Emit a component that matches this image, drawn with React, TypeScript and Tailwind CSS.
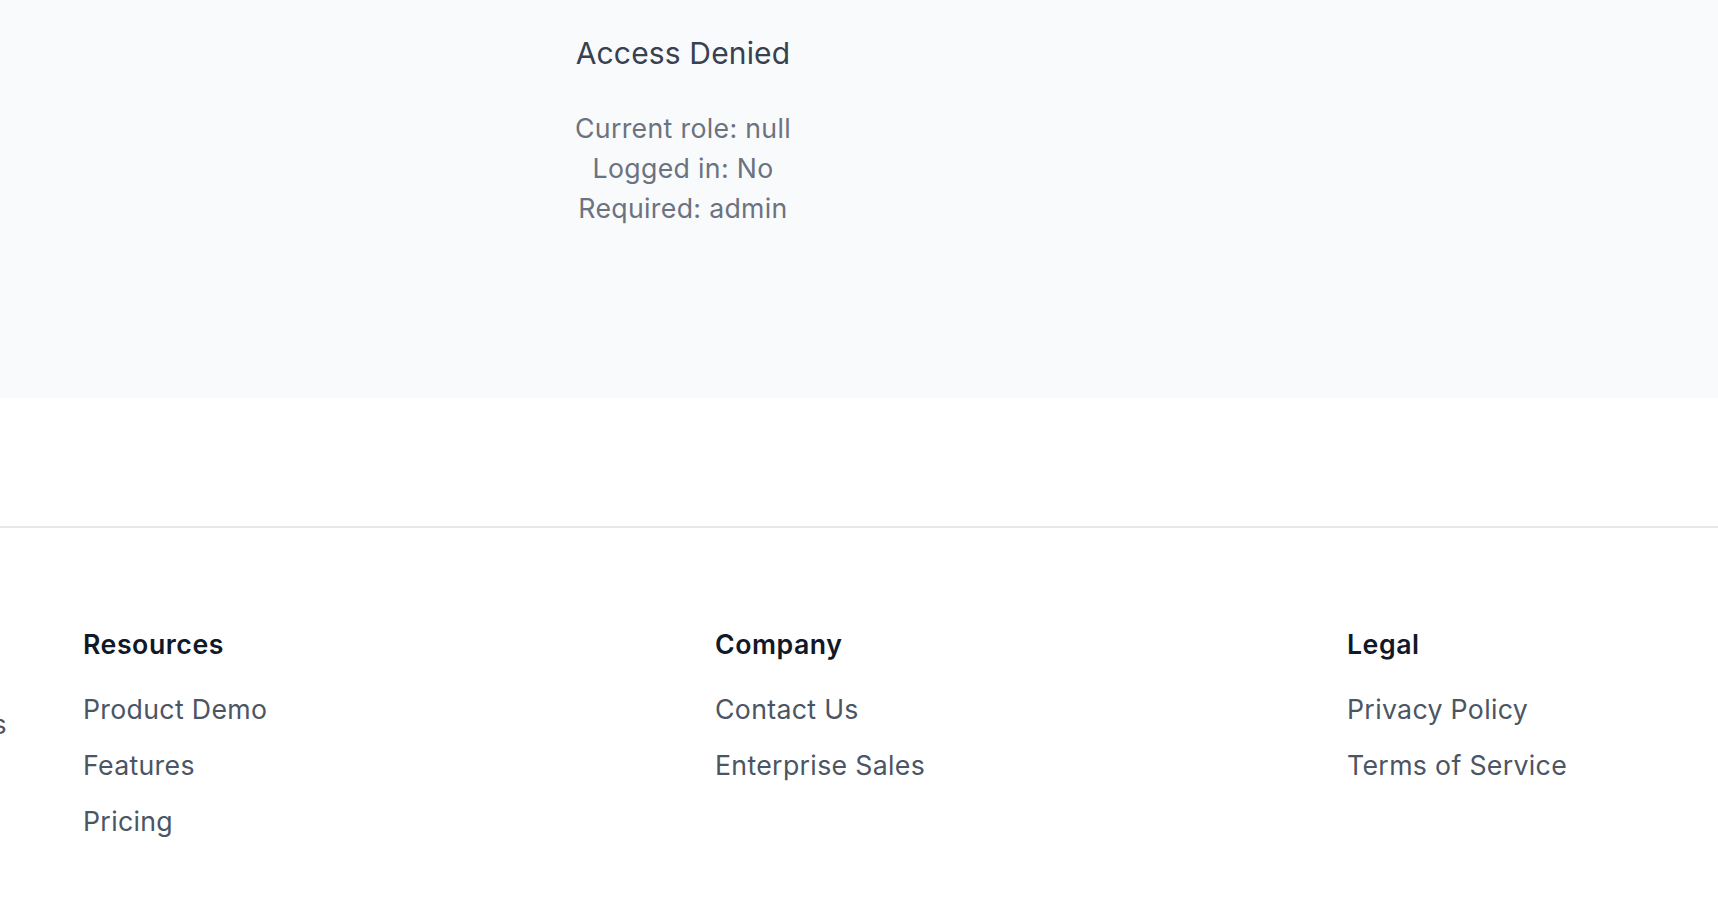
import React from 'react'

const resources = ['Product Demo', 'Features', 'Pricing']
const company = ['Contact Us', 'Enterprise Sales']
const legal = ['Privacy Policy', 'Terms of Service']

function FooterColumn({ title, links }: { title: string; links: string[] }) {
  return (
    <div className="flex flex-col">
      <h3 className="text-[26.7px] leading-[36px] font-semibold tracking-[0.02em] text-[#111827]">{title}</h3>
      <ul className="mt-[29px] flex flex-col gap-[20px]">
        {links.map(link => (
          <li key={link}>
            <a href="#" className="text-[26.7px] leading-[36px] tracking-[0.012em] text-[#4b5563]">
              {link}
            </a>
          </li>
        ))}
      </ul>
    </div>
  )
}

export default function App() {
  return (
    <div className="min-h-[898px] w-full overflow-hidden bg-white" style={{ fontFamily: 'Inter, "Noto Sans", sans-serif' }}>
      {/* access check panel */}
      <section className="h-[398px] bg-[#f9fafb]">
        <div className="w-[1366px] pt-[31px] text-center">
          <h2 className="text-[30px] leading-[44px] tracking-[0.005em] text-[#374151]">Access Denied</h2>
          <div className="mt-[33px] text-[26.7px] leading-[40px] tracking-[0.012em] text-[#6b7280]">
            <p>Current role: null</p>
            <p>Logged in: No</p>
            <p>Required: admin</p>
          </div>
        </div>
      </section>

      <div className="h-[128px]" />

      {/* footer */}
      <footer className="border-t-2 border-[#e5e7eb] pt-[98px] pb-[40px]">
        <div className="-ml-[549px] grid w-[2528px] grid-cols-[556px_556px_556px_556px] gap-x-[76px]">
          <div className="flex flex-col items-end">
            <div className="h-[36px]" />
            <p className="mt-[29px] whitespace-nowrap pt-[15px] text-[26.7px] leading-[36px] tracking-[0.012em] text-[#4b5563]">
              Practical tools for modern operations
            </p>
          </div>
          <FooterColumn title="Resources" links={resources} />
          <FooterColumn title="Company" links={company} />
          <FooterColumn title="Legal" links={legal} />
        </div>
      </footer>
    </div>
  )
}
